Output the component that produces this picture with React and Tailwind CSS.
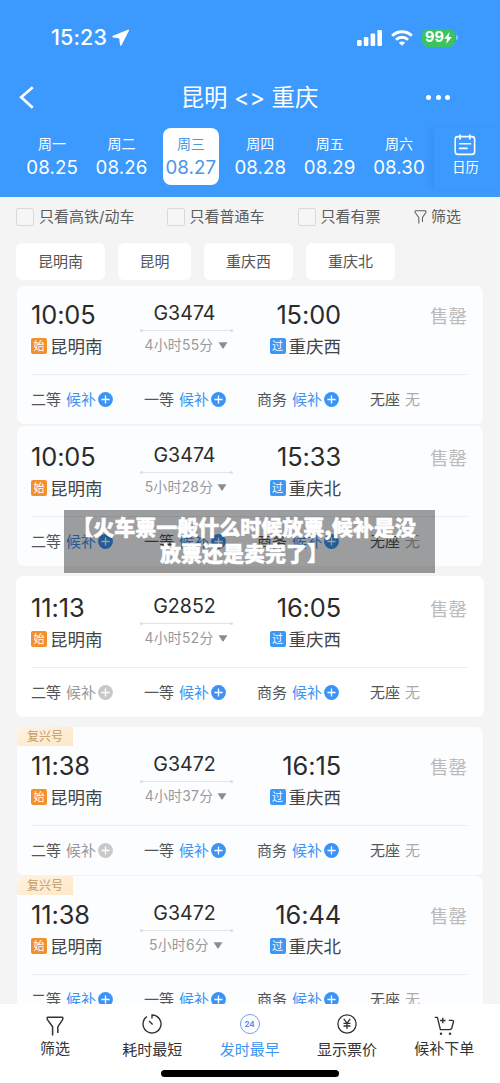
import clsx from 'clsx';

const days = [
  { week: '周一', date: '08.25' },
  { week: '周二', date: '08.26' },
  { week: '周三', date: '08.27', active: true },
  { week: '周四', date: '08.28' },
  { week: '周五', date: '08.29' },
  { week: '周六', date: '08.30' },
];

const stations = [
  { name: '昆明南', cls: 'w-[89px]' },
  { name: '昆明', cls: 'w-[73px]' },
  { name: '重庆西', cls: 'w-[89px]' },
  { name: '重庆北', cls: 'w-[89px]' },
];

const trains = [
  {
    start: '10:05', code: 'G3474', end: '15:00', to: '重庆西', cost: '4小时55分',
    cls: 'mx-[17px] h-[138px] pt-[11px] bg-[#fcfdff]',
  },
  {
    start: '10:05', code: 'G3474', end: '15:33', to: '重庆北', cost: '5小时28分',
    cls: 'mx-[17px] mt-[2px] h-[140px] pt-[13px] bg-[#fcfdff]',
  },
  {
    start: '11:13', code: 'G2852', end: '16:05', to: '重庆西', cost: '4小时52分', secondOff: true,
    cls: 'mx-4 mt-[10px] h-[141px] px-px pt-[14px] bg-white',
  },
  {
    start: '11:38', code: 'G3472', end: '16:15', to: '重庆西', cost: '4小时37分', secondOff: true, fuxing: true,
    cls: 'mx-[17px] mt-[10px] h-[148px] bg-[#fcfdff]',
  },
  {
    start: '11:38', code: 'G3472', end: '16:44', to: '重庆北', cost: '5小时6分', fuxing: true,
    cls: 'mx-[17px] mt-px h-[148px] bg-[#fcfdff]',
  },
];

function FunnelIcon({ className }) {
  return (
    <svg className={className} viewBox="0 0 18 20" fill="none" stroke="currentColor" strokeWidth="1.5" strokeLinejoin="round">
      <path d="M6.6 19.4V10.8L1.4 3.6Q.6 1.2 2 1.2h14q1.4 0 .6 2.4L11.8 10.8V17" />
    </svg>
  );
}

function StatusBar() {
  return (
    <div className="flex h-[75px] items-center pl-[51px] pr-[42px] text-white">
      <span className="text-[21.5px] leading-none font-medium tracking-[0.1px]">15:23</span>
      <svg className="ml-[5px] h-[18px] w-[18px]" viewBox="0 0 18 18" fill="currentColor" stroke="currentColor" strokeWidth="1.6" strokeLinejoin="round">
        <path d="M16.2 1.4L1.2 7.6 8 8.8 8.8 16z" />
      </svg>
      <svg className="ml-auto h-4 w-[26px]" viewBox="0 0 26 16" fill="currentColor">
        <rect x="0" y="10" width="4.6" height="6" rx="1.2" />
        <rect x="6.8" y="7" width="4.6" height="9" rx="1.2" />
        <rect x="13.6" y="3.6" width="4.6" height="12.4" rx="1.2" />
        <rect x="20.4" y="0" width="4.6" height="16" rx="1.2" />
      </svg>
      <svg className="ml-[8px] h-4 w-[22px]" viewBox="0 0 22 16" fill="none" stroke="currentColor" strokeWidth="3">
        <path d="M1.2 5.8a14 14 0 0 1 19.6 0" />
        <path d="M5 9.8a8.5 8.5 0 0 1 12 0" />
        <path d="M11 15.8l-3.1-3.1a4.4 4.4 0 0 1 6.2 0z" fill="currentColor" stroke="none" />
      </svg>
      <div className="ml-[9px] flex h-[18px] w-[33px] items-center justify-center rounded-[6px] bg-[#3ac45f]">
        <span className="text-[14.5px] leading-none font-bold">99</span>
        <svg className="h-3 w-[8px]" viewBox="0 0 8 12" fill="currentColor">
          <path d="M5.6 0L.2 6.8h3L2.2 12 7.8 5H4.6z" />
        </svg>
      </div>
      <div className="ml-px h-[5px] w-[2px] rounded-r bg-white/40" />
    </div>
  );
}

function Header() {
  return (
    <div className="h-[197px] bg-[#3c99fd] text-white">
      <StatusBar />
      <div className="flex h-[44px] items-center pl-[18px] pr-[50px]">
        <svg className="h-[23px] w-[17px]" viewBox="0 0 17 24" fill="none" stroke="currentColor" strokeWidth="2.8">
          <path d="M15 1.2L3 11.8 15 22.6" />
        </svg>
        <h1 className="flex-1 pt-[2px] pl-[38px] text-center text-[23.4px] leading-none whitespace-nowrap">昆明 &lt;&gt; 重庆</h1>
        <div className="flex gap-[4.5px]">
          <i className="h-[5px] w-[5px] rounded-full bg-white" />
          <i className="h-[5px] w-[5px] rounded-full bg-white" />
          <i className="h-[5px] w-[5px] rounded-full bg-white" />
        </div>
      </div>
      <div className="flex pt-[9px] pl-[17.6px]">
        {days.map((d) => (
          <div
            key={d.date}
            className={clsx(
              'mr-[0.4px] flex h-[57px] w-[69px] flex-col items-center',
              d.active && 'text-[#4a95ea]',
            )}
          >
            <div className={clsx('flex h-full w-[56px] flex-col items-center rounded-[8px] pt-[7px]', d.active && 'bg-white')}>
              <span className="text-[14px] leading-[18px]">{d.week}</span>
              <span className="mt-[4px] text-[18.7px] leading-[22px] tracking-[0.1px]">{d.date}</span>
            </div>
          </div>
        ))}
        <div className="flex h-[60px] flex-1 flex-col items-center pt-[6px] pr-[3px] shadow-[-4px_0_5px_-1px_rgba(40,110,210,0.2)]">
          <svg className="h-[22px] w-[22px]" viewBox="0 0 22 22" fill="none" stroke="currentColor" strokeWidth="1.6" strokeLinecap="round">
            <rect x="1.2" y="2.6" width="19.4" height="17.8" rx="2.6" />
            <path d="M6 1v4M15.8 1v4M5.6 9.8h11M5.6 14.4h7.4" />
          </svg>
          <span className="mt-[3px] text-[13.3px] leading-[17px]">日历</span>
        </div>
      </div>
    </div>
  );
}

function Check({ label, className }) {
  return (
    <label className={clsx('flex items-center whitespace-nowrap', className)}>
      <i className="mr-[5px] h-[18px] w-[18px] rounded-[2px] border border-[#d9d9d9] bg-[#f6f6f6]" />
      {label}
    </label>
  );
}

function Filters() {
  return (
    <>
      <div className="flex h-[40px] items-center pl-4 text-[15px] text-[#5c5c5c]">
        <Check label="只看高铁/动车" className="w-[150.5px]" />
        <Check label="只看普通车" className="w-[131px]" />
        <Check label="只看有票" className="w-[116.5px]" />
        <FunnelIcon className="mr-[4px] h-[14px] w-[13px]" />
        <span>筛选</span>
      </div>
      <div className="flex gap-[13px] px-4 pt-[6px]">
        {stations.map((s) => (
          <div
            key={s.name}
            className={clsx('flex h-[37px] items-center justify-center rounded-[6px] bg-white pt-px text-[15px] text-[#555]', s.cls)}
          >
            {s.name}
          </div>
        ))}
      </div>
    </>
  );
}

function Plus({ off }) {
  return (
    <svg className={clsx('ml-[2px] h-[15px] w-[15px]', off ? 'text-[#c8c8c8]' : 'text-[#3b94f5]')} viewBox="0 0 15 15">
      <circle cx="7.5" cy="7.5" r="7.4" fill="currentColor" />
      <path d="M7.5 3.4v8.2M3.4 7.5h8.2" stroke="#fff" strokeWidth="1.3" />
    </svg>
  );
}

function Seat({ name, off }) {
  return (
    <div className="flex w-[113px] items-center whitespace-nowrap">
      <span className="mr-[5px] pt-px">{name}</span>
      <span className={clsx('pt-px', off ? 'text-[#999]' : 'text-[#3b94f5]')}>候补</span>
      <Plus off={off} />
    </div>
  );
}

function Station({ tag, name, tagClass }) {
  return (
    <div className="flex h-[20px] items-center whitespace-nowrap">
      <span className={clsx('flex h-4 w-4 items-center justify-center rounded-[2px] text-[11px] leading-none text-white', tagClass)}>
        {tag}
      </span>
      <span className="ml-[3px] pt-[2px] text-[17.5px] leading-none text-[#444]">{name}</span>
    </div>
  );
}

function TrainCard({ train }) {
  return (
    <div className={clsx('shrink-0 overflow-hidden rounded-[7px]', train.cls)}>
      {train.fuxing ? (
        <div className="mb-[2px] flex h-[19px] w-[56px] items-center justify-center bg-gradient-to-br from-[#fff3e0] to-[#fde7c8] text-[12px] text-[#c09a63]">
          复兴号
        </div>
      ) : null}
      <div className="flex h-[77px] pl-[14px]">
        <div className="w-[109px]">
          <div className="flex h-[35px] items-center text-[25.4px] leading-none tracking-[-0.1px] text-[#2b2b2b]">{train.start}</div>
          <div className="mt-[4px]">
            <Station tag="始" name="昆明南" tagClass="bg-[#f3902c]" />
          </div>
        </div>
        <div className="w-[93px]">
          <div className="flex h-[32px] items-center justify-center pt-px pr-[4px] text-[19.6px] leading-none text-[#2b2b2b]">
            {train.code}
          </div>
          <div className="flex h-[3px] items-center justify-between bg-[linear-gradient(#e2e4e6,#e2e4e6)] bg-[length:100%_1px] bg-center bg-no-repeat">
            <i className="h-[3px] w-[3px] rounded-full bg-[#dcdee0]" />
            <i className="h-[3px] w-[3px] rounded-full bg-[#dcdee0]" />
          </div>
          <div className="mt-[3px] flex h-[20px] items-center justify-center pr-px text-[13.9px] tracking-[0.25px] whitespace-nowrap text-[#999]">
            {train.cost}
            <svg className="ml-[4px] h-[7px] w-[10px]" viewBox="0 0 10 7" fill="#8c8c8c">
              <path d="M.6.3h8.8L5.6 6.3q-.6.7-1.2 0z" />
            </svg>
          </div>
        </div>
        <div className="flex w-[108px] flex-col items-end">
          <div className="flex h-[35px] items-center text-[25.4px] leading-none tracking-[-0.1px] text-[#2b2b2b]">{train.end}</div>
          <div className="mt-[4px]">
            <Station tag="过" name={train.to} tagClass="bg-[#3e97f5]" />
          </div>
        </div>
        <div className="flex h-[40px] flex-1 items-center justify-end pr-4 text-[18.5px] text-[#bbb]">售罄</div>
      </div>
      <div className="mr-4 ml-[14px] h-px bg-[#eaecee]" />
      <div className="flex h-[49px] items-center pl-[14px] text-[15px] text-[#555]">
        <Seat name="二等" off={train.secondOff} />
        <Seat name="一等" />
        <Seat name="商务" />
        <span className="mr-[5px] pt-px">无座</span>
        <span className="pt-px text-[#aaa]">无</span>
      </div>
    </div>
  );
}

function Tab({ label, icon, active, className }) {
  return (
    <div className={clsx('flex w-[97.3px] flex-col items-center', active ? 'text-[#3f94f2]' : 'text-[#333]', className)}>
      <div className="flex h-[22px] items-center">{icon}</div>
      <span className="mt-[5px] text-[15px] leading-[20px] whitespace-nowrap">{label}</span>
    </div>
  );
}

function TabBar() {
  return (
    <div className="h-[79px] shrink-0 bg-white">
      <div className="flex h-[61px] pt-[9px] pl-[6.4px]">
        <Tab label="筛选" className="-mt-px" icon={<FunnelIcon className="mt-[5px] h-[20px] w-[18px]" />} />
        <Tab
          label="耗时最短"
          icon={
            <svg className="h-[20px] w-[20px]" viewBox="0 0 20 20" fill="none" stroke="currentColor" strokeWidth="1.4">
              <path d="M4.9 2.6a9 9 0 1 0 5.1-1.6v3.6M7 7l3.6 3.6" />
            </svg>
          }
        />
        <Tab
          label="发时最早"
          active
          icon={
            <div className="flex h-[20px] w-[20px] items-center justify-center rounded-full border border-[#6f9ff0] text-[8px] leading-none font-bold text-[#5a8fee]">
              24
            </div>
          }
        />
        <Tab
          label="显示票价"
          icon={
            <svg className="h-[20px] w-[20px]" viewBox="0 0 20 20" fill="none" stroke="currentColor" strokeWidth="1.3">
              <circle cx="10" cy="10" r="9.1" />
              <path d="M6.8 4.8L10 9.2l3.2-4.4M10 9.2v5.8M6.5 9.4h7M6.5 12h7" strokeWidth="1.3" />
            </svg>
          }
        />
        <Tab
          label="候补下单"
          className="-mt-px"
          icon={
            <svg className="mt-[5px] h-[20px] w-[21px]" viewBox="0 0 21 20" fill="none" stroke="currentColor" strokeWidth="1.4" strokeLinejoin="round">
              <path d="M.8 1.4h2.6l3 12.2h9.4q1.6 0 2-1.6l1.6-6q.4-1.6-1.2-1.6h-3.4M8.8 1.8v5.4M6.1 4.5h5.4" />
              <circle cx="7" cy="17.8" r="1.2" fill="currentColor" stroke="none" />
              <circle cx="16" cy="17.8" r="1.2" fill="currentColor" stroke="none" />
            </svg>
          }
        />
      </div>
      <div className="mx-auto mt-[5px] h-[7px] w-[178px] rounded-full bg-black" />
    </div>
  );
}

export default function App() {
  return (
    <div className="relative flex h-[1083px] w-[500px] flex-col overflow-hidden bg-[#f4f4f4] font-[Inter,'Noto_Sans_CJK_SC',sans-serif]">
      <Header />
      <Filters />
      <div className="mt-[6px] flex min-h-0 flex-1 flex-col overflow-hidden">
        {trains.map((train, i) => (
          <TrainCard key={i} train={train} />
        ))}
      </div>
      <TabBar />
      <div className="absolute top-[510px] left-[64px] h-[63px] w-[371px] bg-black/38 pt-[3px] pr-[11px] text-center font-['Noto_Sans_CJK_SC',sans-serif] text-[21px] leading-[26px] font-black whitespace-nowrap text-white [-webkit-text-stroke:0.5px_white]">
        【火车票一般什么时候放票,候补是没
        <br />
        放票还是卖完了】
      </div>
    </div>
  );
}
